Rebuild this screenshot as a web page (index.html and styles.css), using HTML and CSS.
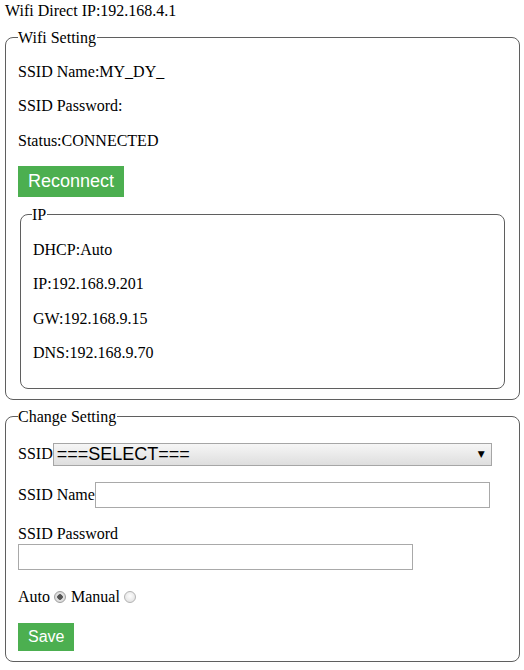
FILE: index.html
```html
<!DOCTYPE html>
<html>
<head>
<meta charset="utf-8">
<title>Wifi Setting</title>
<link rel="stylesheet" href="styles.css">
</head>
<body>
<div class="title">Wifi Direct IP:192.168.4.1</div>
<fieldset class="box box-wifi">
  <legend>Wifi Setting</legend>
  <p>SSID Name:MY_DY_</p>
  <p>SSID Password:</p>
  <p>Status:CONNECTED</p>
  <button class="btn btn-big" type="button">Reconnect</button>
  <fieldset class="box box-ip">
    <legend>IP</legend>
    <p>DHCP:Auto</p>
    <p>IP:192.168.9.201</p>
    <p>GW:192.168.9.15</p>
    <p>DNS:192.168.9.70</p>
  </fieldset>
</fieldset>
<fieldset class="box box-change">
  <legend>Change Setting</legend>
  <div class="row row-ssid"><label>SSID</label><span class="select-wrap"><select class="select"><option>===SELECT===</option></select><span class="select-arrow">&#9660;</span></span></div>
  <div class="row row-name"><label>SSID Name</label><input class="text-input" type="text"></div>
  <div class="row row-pass"><label class="block-label">SSID Password</label><input class="text-input" type="password"></div>
  <div class="row row-radio"><label>Auto</label><input class="radio" type="radio" name="dhcp" checked><label>Manual</label><input class="radio" type="radio" name="dhcp"></div>
  <button class="btn btn-small" type="button">Save</button>
</fieldset>
</body>
</html>
```
FILE: styles.css
```css
html, body {
  margin: 0;
  padding: 0;
  background: #ffffff;
}
body {
  font-family: "Liberation Serif", "Times New Roman", serif;
  font-size: 16px;
  line-height: normal;
  color: #000;
}
.title {
  padding: 2px 0 0 5px;
}
.box {
  border: 1px solid #5f5f5f;
  border-radius: 8px;
  padding: 0 12px 10px 12px;
  margin: 8.6px 4px 0 5px;
}
.box legend {
  padding: 0 1px 0 0;
  margin-left: 0;
}
.box p {
  margin: 16px 0;
}
.box-wifi p:nth-of-type(2) {
  margin-top: 16.6px;
}
.box-wifi p:nth-of-type(3) {
  margin-top: 16.6px;
}
.box-ip {
  margin: 9px 2px 0 2px;
  padding-top: 1px;
}
.box-ip legend {
  margin-left: -1px;
}
.box-change {
  margin-top: 8px;
}
.btn {
  display: block;
  border: none;
  background: #4caf50;
  color: #fff;
  font-family: "Liberation Sans", Arial, sans-serif;
  padding: 0 10px;
  margin: 0;
  cursor: pointer;
}
.btn-big {
  font-size: 18px;
  height: 31px;
}
.btn-small {
  font-size: 16px;
  height: 28px;
}
.row {
  margin: 16px 0;
}
.row-ssid {
  margin: 17px 0 0 0;
  display: flex;
  align-items: center;
}
.select-wrap {
  position: relative;
  display: inline-block;
}
.select {
  appearance: none;
  -webkit-appearance: none;
  display: block;
  box-sizing: border-box;
  width: 439px;
  height: 23px;
  margin: 0;
  padding: 0 20px 0 3px;
  border: 1px solid #a6a6a6;
  border-radius: 0;
  background: linear-gradient(#f6f6f6, #dedede);
  font-family: "Liberation Sans", Arial, sans-serif;
  font-size: 18px;
  line-height: 21px;
  color: #000;
}
.select-arrow {
  position: absolute;
  right: 7px;
  top: 5px;
  font-family: "DejaVu Sans", sans-serif;
  font-size: 9px;
  line-height: 12px;
  pointer-events: none;
}
.row-name {
  margin: 16px 0 0 0;
  display: flex;
  align-items: center;
}
.text-input {
  display: block;
  width: 395px;
  height: 26px;
  box-sizing: border-box;
  margin: 0;
  padding: 0 2px;
  border: 1px solid #a9a9a9;
  border-radius: 0;
  font-family: "Liberation Sans", Arial, sans-serif;
  font-size: 16px;
  background: #fff;
}
.row-pass {
  margin: 17px 0 0 0;
}
.block-label {
  display: block;
  margin-bottom: 0.6px;
}
.row-radio {
  margin: 18px 0 17.6px 0;
  display: flex;
  align-items: center;
}
.row-radio .radio {
  margin: 1px 5px 0 4px;
}
.radio {
  appearance: none;
  -webkit-appearance: none;
  width: 12px;
  height: 12px;
  border: 1px solid #b3b3b3;
  border-radius: 50%;
  background: radial-gradient(circle at 50% 40%, #fdfdfd, #dcdcdc);
  box-sizing: border-box;
}
.radio:checked {
  background: radial-gradient(circle, #555 0 2.5px, #e4e4e4 3px, #d0d0d0 100%);
  border-color: #a0a0a0;
}
```
